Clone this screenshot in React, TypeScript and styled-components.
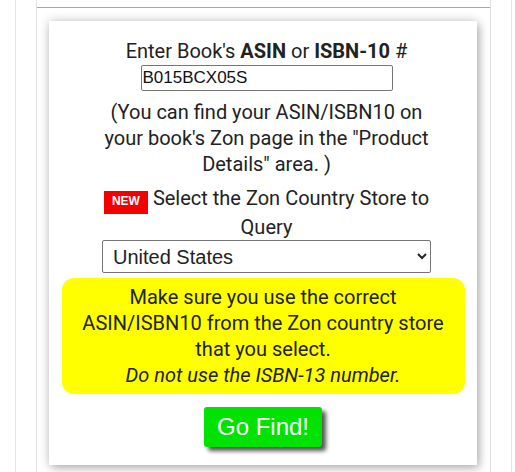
import styled, { createGlobalStyle } from 'styled-components';

const GlobalStyle = createGlobalStyle`
  html, body {
    margin: 0;
    padding: 0;
    background: #fff;
  }
  body {
    font-family: Roboto, 'Liberation Sans', sans-serif;
    overflow: hidden;
  }
`;

const Page = styled.div`
  margin-left: 15px;
  width: 495px;
  min-height: 100vh;
  border-left: 1px solid #e4e4e4;
  border-right: 1px solid #e4e4e4;
`;

const Column = styled.div`
  margin-left: 20px;
  width: 453px;
  min-height: 100vh;
  padding-top: 7px;
  border-left: 1px solid #e0e0e0;
  border-right: 1px solid #e0e0e0;
`;

const Rule = styled.div`
  height: 1px;
  background: #a9a9a9;
`;

const Card = styled.div`
  margin: 13px 0 0 12px;
  width: 428px;
  height: 444px;
  box-sizing: border-box;
  padding-top: 17px;
  background: #fff;
  box-shadow: 0 0 10px rgba(0, 0, 0, 0.22), 3px 4px 8px rgba(0, 0, 0, 0.18);
  display: flex;
  flex-direction: column;
  align-items: center;
`;

const TextBlock = styled.div`
  align-self: stretch;
  margin: 0 46px 0 53px;
  display: flex;
  flex-direction: column;
  align-items: center;
  text-align: center;
  color: #222;
  font-size: 20px;
  line-height: 26px;
`;

const Heading = styled.div`
  b {
    font-weight: 700;
  }
`;

const AsinInput = styled.input`
  box-sizing: border-box;
  width: 252px;
  height: 26px;
  margin: 1px 0 0 0;
  padding: 0 1px;
  border: 1px solid #767676;
  border-radius: 2px;
  font-family: 'Liberation Sans', Arial, sans-serif;
  font-size: 17px;
  color: #111;
  outline: none;
`;

const Note = styled.p`
  margin: 8px 0 0;
`;

const NewBadge = styled.span`
  display: inline-block;
  width: 44px;
  height: 23px;
  box-sizing: border-box;
  padding-top: 3px;
  margin-right: 5px;
  background: #f50000;
  color: #fff;
  font-family: 'Liberation Sans', Arial, sans-serif;
  font-weight: 700;
  font-size: 12px;
  line-height: 14px;
  text-align: center;
  vertical-align: baseline;
`;

const StoreSelect = styled.select`
  box-sizing: border-box;
  align-self: stretch;
  height: 33px;
  margin-top: 0;
  padding: 0 6px;
  border: 1px solid #767676;
  border-radius: 2px;
  background: #fff;
  font-family: 'Liberation Sans', Arial, sans-serif;
  font-size: 20px;
  color: #222;
`;

const Warning = styled.div`
  margin-top: 5px;
  width: 403px;
  box-sizing: border-box;
  padding: 6px 10px;
  background: #ffff00;
  border-radius: 12px;
  color: #222;
  font-size: 20px;
  line-height: 26px;
  text-align: center;

  em {
    font-style: italic;
  }
`;

const FindButton = styled.button`
  margin-top: 13px;
  height: 40px;
  padding: 0 13px;
  border: none;
  border-radius: 3px;
  background: #00e300;
  color: #fff;
  font-family: 'Liberation Sans', Arial, sans-serif;
  font-size: 24px;
  box-shadow: 4px 4px 4px #555;
  cursor: pointer;
`;

const App = () => {
  return (
    <>
      <GlobalStyle />
      <Page>
        <Column>
          <Rule />
          <Card>
            <TextBlock>
              <Heading>
                Enter Book's <b>ASIN</b> or <b>ISBN-10</b> #
              </Heading>
              <AsinInput type="text" defaultValue="B015BCX05S" />
              <Note>
                (You can find your ASIN/ISBN10 on your book's Zon page in the "Product
                Details" area. )
              </Note>
              <Note>
                <NewBadge>NEW</NewBadge>Select the Zon Country Store to Query
              </Note>
              <StoreSelect defaultValue="us">
                <option value="us">United States</option>
                <option value="uk">United Kingdom</option>
                <option value="de">Germany</option>
                <option value="fr">France</option>
                <option value="ca">Canada</option>
              </StoreSelect>
            </TextBlock>
            <Warning>
              Make sure you use the correct ASIN/ISBN10 from the Zon country store
              that you select.
              <br />
              <em>Do not use the ISBN-13 number.</em>
            </Warning>
            <FindButton type="button">Go Find!</FindButton>
          </Card>
        </Column>
      </Page>
    </>
  );
};

export default App;
